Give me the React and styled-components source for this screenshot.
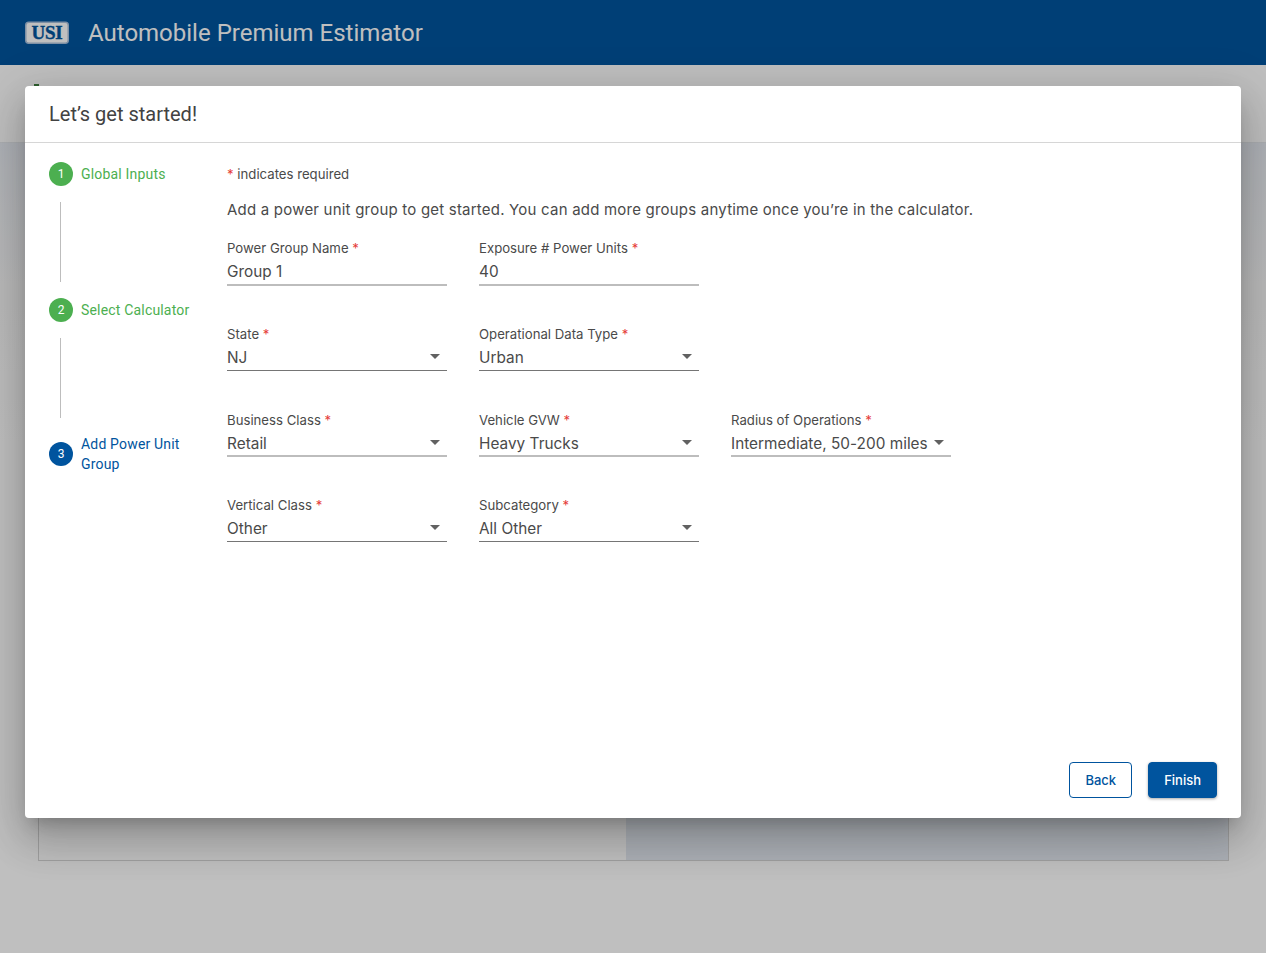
import React from "react";
import styled, { createGlobalStyle } from "styled-components";

const Global = createGlobalStyle`
  html, body { margin: 0; padding: 0; background: #fff; font-family: Roboto, "Liberation Sans", sans-serif; }
  #root { height: 953px; overflow: hidden; position: relative; }
  * { box-sizing: border-box; }
`;

const Page = styled.div`
  height: 953px;
  display: flex;
  flex-direction: column;
  background: #fff;
`;
const Header = styled.header`
  height: 65px;
  flex: none;
  background: #00549e;
  display: flex;
  align-items: center;
  padding-left: 25px;
  gap: 17px;
`;
const AppTitle = styled.div`
  color: #fff;
  font-size: 24px;
`;
const SubBar = styled.div`
  height: 78px;
  flex: none;
  background: #fff;
  border-bottom: 1px solid #e6e8ec;
  padding: 19px 0 0 34px;
`;
const SubBarMark = styled.div`
  width: 5px;
  height: 8px;
  background: #3f7f3f;
`;
const Body = styled.div`
  flex: 1;
  background: linear-gradient(#e9edf4 0, #f8f8f8 140px, #ffffff 300px);
  padding: 0 37px 92px 38px;
  display: flex;
`;
const Panel = styled.div`
  flex: 1;
  display: flex;
  border: 1px solid #d4d4d4;
`;
const PanelLeft = styled.div`
  width: 587px;
  background: #fff;
`;
const PanelRight = styled.div`
  flex: 1;
  background: #e6ebf3;
`;
const Scrim = styled.div`
  position: absolute;
  inset: 0;
  background: rgba(0, 0, 0, 0.25);
`;
const Modal = styled.div`
  position: absolute;
  left: 25px;
  top: 86px;
  width: 1216px;
  height: 732px;
  background: #fff;
  border-radius: 4px;
  box-shadow: 0 11px 15px -7px rgba(0,0,0,.2), 0 24px 38px 3px rgba(0,0,0,.14), 0 9px 46px 8px rgba(0,0,0,.12);
  display: flex;
  flex-direction: column;
`;
const ModalHead = styled.div`
  height: 57px;
  flex: none;
  border-bottom: 1px solid #d6d6d6;
  padding: 0 24px;
  display: flex;
  align-items: center;
  font-size: 20px;
  color: #424242;
`;
const ModalBody = styled.div`
  flex: 1;
  display: flex;
  padding: 19px 24px 0;
`;
const Stepper = styled.div`
  width: 178px;
  flex: none;
  display: flex;
  flex-direction: column;
`;
const Step = styled.div`
  display: flex;
  align-items: center;
  gap: 8px;
  min-height: 24px;
`;
const Circle = styled.div`
  width: 24px;
  height: 24px;
  border-radius: 50%;
  flex: none;
  background: ${p => p.$color};
  color: #fff;
  font-size: 12px;
  display: flex;
  align-items: center;
  justify-content: center;
`;
const StepLabel = styled.div`
  color: ${p => p.$color};
  font-size: 14px;
  line-height: 20px;
  letter-spacing: 0.18px;
  width: 110px;
`;
const Connector = styled.div`
  width: 1px;
  height: 80px;
  margin: 16px 0 16px 11px;
  background: #bdbdbd;
`;
const Content = styled.div`
  flex: 1;
  display: flex;
  flex-direction: column;
  font-family: Inter, "Liberation Sans", sans-serif;
`;
const RequiredNote = styled.div`
  font-size: 13.2px;
  line-height: 24px;
  color: #4a4a4a;
`;
const Star = styled.span`
  color: #e53935;
`;
const Intro = styled.div`
  font-size: 15px;
  line-height: 24px;
  letter-spacing: 0.21px;
  color: #4a4a4a;
  margin-top: 12px;
`;
const Rows = styled.div`
  display: grid;
  grid-template-rows: 86px 86px 85px auto;
  margin-top: 17px;
`;
const Row = styled.div`
  display: flex;
  gap: 32px;
  align-items: flex-start;
`;
const Field = styled.div`
  width: 220px;
  height: ${p => (p.$tall ? "47px" : "46px")};
  display: flex;
  flex-direction: column;
`;
const Label = styled.div`
  font-size: 13.2px;
  line-height: 18px;
  color: #4a4a4a;
  height: 18px;
`;
const Input = styled.div`
  flex: 1;
  display: flex;
  align-items: center;
  justify-content: space-between;
  padding: 2px 7px 0 0;
  font-size: 15.35px;
  letter-spacing: 0.02px;
  color: #4a4a4a;
  border-bottom: ${p => (p.$thick ? "2px solid #bdbdbd" : "1px solid #757575")};
`;
const Arrow = styled.span`
  width: 0;
  height: 0;
  margin-top: -2px;
  border-left: 5px solid transparent;
  border-right: 5px solid transparent;
  border-top: 5px solid #616161;
`;
const Footer = styled.div`
  height: 80px;
  flex: none;
  padding: 0 24px 20px;
  display: flex;
  justify-content: flex-end;
  align-items: flex-end;
  gap: 16px;
`;
const Button = styled.button`
  height: 36px;
  padding: 0 15px;
  border-radius: 4px;
  font: 500 13px Inter, sans-serif;
  border: 1px solid #00549e;
  color: ${p => (p.$primary ? "#fff" : "#00549e")};
  background: ${p => (p.$primary ? "#00549e" : "#fff")};
  box-shadow: ${p => (p.$primary ? "0 1px 3px rgba(0,0,0,.35)" : "none")};
`;

const Logo = () => (
  <svg width="46" height="24" viewBox="0 0 46 24" aria-hidden="true">
    <rect x="0.75" y="1.25" width="42.5" height="21" rx="3" fill="#fff" stroke="#a8c0dc" strokeWidth="1.5" />
    <text x="22" y="18" textAnchor="middle" fontFamily="Liberation Serif, serif" fontWeight="700" fontSize="19" fill="#00549e" stroke="#00549e" strokeWidth="0.4" letterSpacing="-0.2">USI</text>
  </svg>
);

const F = ({ label, value, select, thick, tall }) => (
  <Field $tall={tall}>
    <Label>{label} <Star>*</Star></Label>
    <Input $thick={thick}>
      <span>{value}</span>
      {select && <Arrow />}
    </Input>
  </Field>
);

export default function App() {
  return (
    <>
      <Global />
      <Page>
        <Header>
          <Logo />
          <AppTitle>Automobile Premium Estimator</AppTitle>
        </Header>
        <SubBar><SubBarMark /></SubBar>
        <Body>
          <Panel>
            <PanelLeft />
            <PanelRight />
          </Panel>
        </Body>
      </Page>
      <Scrim />
      <Modal>
        <ModalHead>Let’s get started!</ModalHead>
        <ModalBody>
          <Stepper>
            <Step>
              <Circle $color="#4caf50">1</Circle>
              <StepLabel $color="#4caf50">Global Inputs</StepLabel>
            </Step>
            <Connector />
            <Step>
              <Circle $color="#4caf50">2</Circle>
              <StepLabel $color="#4caf50">Select Calculator</StepLabel>
            </Step>
            <Connector />
            <Step>
              <Circle $color="#00549e">3</Circle>
              <StepLabel $color="#00549e">Add Power Unit Group</StepLabel>
            </Step>
          </Stepper>
          <Content>
            <RequiredNote><Star>*</Star> indicates required</RequiredNote>
            <Intro>Add a power unit group to get started. You can add more groups anytime once you’re in the calculator.</Intro>
            <Rows>
              <Row>
                <F label="Power Group Name" value="Group 1" thick tall />
                <F label="Exposure # Power Units" value="40" thick tall />
              </Row>
              <Row>
                <F label="State" value="NJ" select />
                <F label="Operational Data Type" value="Urban" select />
              </Row>
              <Row>
                <F label="Business Class" value="Retail" select thick />
                <F label="Vehicle GVW" value="Heavy Trucks" select thick />
                <F label="Radius of Operations" value="Intermediate, 50-200 miles" select thick />
              </Row>
              <Row>
                <F label="Vertical Class" value="Other" select />
                <F label="Subcategory" value="All Other" select />
              </Row>
            </Rows>
          </Content>
        </ModalBody>
        <Footer>
          <Button>Back</Button>
          <Button $primary>Finish</Button>
        </Footer>
      </Modal>
    </>
  );
}
